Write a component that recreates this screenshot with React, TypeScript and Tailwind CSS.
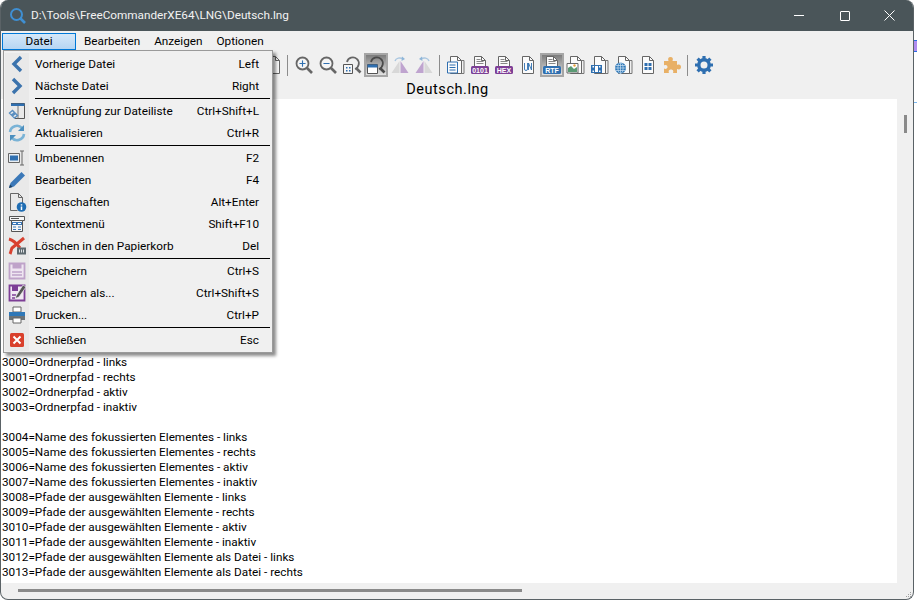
import type { ReactNode } from "react";
import { Plus, Minus } from "lucide-react";

const font = "font-['Roboto','Open_Sans',sans-serif]";

const Svg = ({ children, size = 20 }: { children: ReactNode; size?: number }) => (
  <svg width={size} height={size} viewBox="0 0 20 20" fill="none">
    {children}
  </svg>
);

/* menu icons */
const IconPrev = () => (
  <Svg><path d="M14 3 7 10l7 7" stroke="#3b73ad" strokeWidth="3.4" /></Svg>
);
const IconNext = () => (
  <Svg><path d="M6 3l7 7-7 7" stroke="#3b73ad" strokeWidth="3.4" /></Svg>
);
const IconLink = () => (
  <Svg>
    <path d="M4 2.500h13.500v15H8" stroke="#555" />
    <path d="M4 2.500h13.500v2.500H4z" fill="#2f6fb0" />
    <path d="M11 5v12.500" stroke="#777" />
    <path d="M2.500 12l3-2.500 2 2-3 2.500zM5.500 15l3-2.500 2 2-3 2.500z" stroke="#5b8fc0" strokeWidth="1.400" />
  </Svg>
);
const IconRefresh = () => (
  <Svg>
    <path d="M3 9a7 7 0 0 1 12-4" stroke="#7ab3d6" strokeWidth="2.600" />
    <path d="M17 2v6h-6z" fill="#4b8fbf" />
    <path d="M17 11a7 7 0 0 1-12 4" stroke="#7ab3d6" strokeWidth="2.600" />
    <path d="M3 18v-6h6z" fill="#4b8fbf" />
  </Svg>
);
const IconRename = () => (
  <Svg>
    <path d="M1.500 5.500h11v9h-11z" fill="#e9eef3" stroke="#666" />
    <path d="M3 7.500h8v5H3z" fill="#2f6fb0" />
    <path d="M13 3h4M15 3v14M13 17h4" stroke="#666" />
  </Svg>
);
const IconEdit = () => (
  <Svg>
    <path d="M2 18l1.500-5L14.500 2l3.500 3.500L7 16.500z" fill="#3b78b8" />
    <path d="M2 18l1-3.500L5.500 17z" fill="#1d3f60" />
  </Svg>
);
const IconProps = () => (
  <Svg>
    <path d="M3.500 1.500h8l4 4v7M3.500 1.500v17h7" stroke="#666" />
    <path d="M11.500 1.500v4h4" stroke="#666" />
    <circle cx="14.500" cy="15" r="4.800" fill="#1f6db3" />
    <path d="M14.500 12.200v1.200M14.500 14.500v3.600" stroke="#fff" strokeWidth="1.500" />
  </Svg>
);
const IconContext = () => (
  <Svg>
    <path d="M2.500 2.500h15v4h-15z" fill="#f5f5f5" stroke="#555" />
    <path d="M4 4.500h8" stroke="#555" />
    <path d="M4.500 6.500h11v11h-11z" fill="#f5f5f5" stroke="#555" />
    <path d="M5 8h10v3H5z" fill="#3b78b8" />
    <path d="M6 9.500h3M11 9.500h3" stroke="#fff" />
    <path d="M6 13h3M11 13h3M6 15.500h3M11 15.500h3" stroke="#3b78b8" />
  </Svg>
);
const IconDelete = () => (
  <Svg>
    <path d="M2 3c4 1 8 5 11 9M17 2 5 12c-1 2-1 4-2 6" stroke="#d8412f" strokeWidth="3" />
    <path d="M10 11.500h9v7h-9z" fill="#5f6a70" />
    <path d="M12.500 13.500v3M14.500 13.500v3M16.500 13.500v3" stroke="#dfe3e5" />
  </Svg>
);
const IconSave = () => (
  <Svg>
    <path d="M2.500 2.500h15v15h-15z" fill="#efe6f1" stroke="#bfa3c9" strokeWidth="1.800" />
    <path d="M5.500 2.500h9v5h-9z" fill="#bfa3c9" />
    <path d="M5 11h10M5 14h10" stroke="#bfa3c9" strokeWidth="1.400" />
  </Svg>
);
const IconSaveAs = () => (
  <Svg>
    <path d="M2.500 2.500h15v15h-15z" fill="#f1e9f3" stroke="#7d3f96" strokeWidth="1.800" />
    <path d="M5 3h6v5H5z" fill="#7d3f96" />
    <path d="M5 12h4M5 15h3" stroke="#7d3f96" strokeWidth="1.400" />
    <path d="M9 13 16 2l3 2-7 10-3.500 1.500z" fill="#555" stroke="#f0f0f0" strokeWidth="0.700" />
  </Svg>
);
const IconPrint = () => (
  <Svg>
    <path d="M6 2h8v5H6z" fill="#fff" stroke="#666" />
    <path d="M2 7h16v8H2z" fill="#6b7378" />
    <path d="M2 7h16v4H2z" fill="#2f78b8" />
    <path d="M6 13h8v5H6z" fill="#fff" stroke="#666" />
  </Svg>
);
const IconClose = () => (
  <Svg>
    <rect x="3" y="3" width="14" height="14" rx="1.500" fill="#d9402c" />
    <path d="M6.500 6.500l7 7M13.500 6.500l-7 7" stroke="#fff" strokeWidth="2" />
  </Svg>
);

/* toolbar icons */
const Magnifier = ({ children }: { children?: ReactNode }) => (
  <Svg>
    <circle cx="8.500" cy="8.500" r="6" stroke="#666" strokeWidth="1.800" fill="#f5f5f5" />
    <path d="M13 13l5 5" stroke="#666" strokeWidth="2.600" />
    {children}
  </Svg>
);
const ZoomFit = () => (
  <Svg>
    <path d="M5 7a6 6 0 1 1 8 7" stroke="#666" strokeWidth="1.800" />
    <path d="M14 13l4.500 4.500" stroke="#666" strokeWidth="2.600" />
    <path d="M1.500 9.500h9v9h-9z" fill="#f5f5f5" stroke="#555" />
    <path d="M4 12h1.500v1.500H4zM7 12h1.500v1.500H7zM4 15h1.500v1.500H4zM7 15h1.500v1.500H7z" fill="#2f6fb0" />
  </Svg>
);
const ZoomWindow = () => (
  <Svg>
    <path d="M5 7a6 6 0 1 1 8 7" stroke="#4a4a4a" strokeWidth="1.800" />
    <path d="M14 13l4.500 4.500" stroke="#4a4a4a" strokeWidth="2.600" />
    <path d="M1.500 9.500h10v9h-10z" fill="#fff" stroke="#555" />
    <path d="M1.500 9.500h10v3h-10z" fill="#2f6fb0" />
  </Svg>
);
const Mirror = ({ flip }: { flip?: boolean }) => (
  <Svg>
    <g transform={flip ? "matrix(-1 0 0 1 20 0)" : undefined}>
      <path d="M9.500 6v12H1.500z" fill="#d8d8d8" />
      <path d="M10.500 6v12h8z" fill="#bfa4cf" />
      <path d="M5 6c1-3 5-4 8-2" stroke="#a9c6e0" strokeWidth="1.400" />
      <path d="M12 1.500l3 2.500-3.500 2z" fill="#8fb6d8" />
    </g>
  </Svg>
);
const PageBase = ({ children, stack }: { children?: ReactNode; stack?: boolean }) => (
  <Svg>
    {stack && <path d="M15.500 5.500h2.500v13h-4" stroke="#777" />}
    <path d="M4.500 1.500h7l4 4v13h-11z" fill="#fbfbfb" stroke="#666" />
    <path d="M11.500 1.500v4h4" stroke="#666" />
    {children}
  </Svg>
);
const PageLines = () => (
  <PageBase stack>
    <path d="M1.500 7h10v11h-10z" fill="#fbfbfb" stroke="#2f6fb0" />
    <path d="M3.500 10h6M3.500 12.500h6M3.500 15h6" stroke="#2f6fb0" />
  </PageBase>
);
const Badge = ({ label, fill }: { label: string; fill: string }) => (
  <>
    <path d="M6.500 4.500h4M6.500 6.500h7M6.500 8.500h7" stroke="#888" />
    <rect x="1" y="11" width="18" height="8" rx="1.500" fill={fill} />
    <text x="10" y="17.600" textAnchor="middle" fontSize="7" fontWeight="700" fill="#fff" fontFamily="Liberation Sans">
      {label}
    </text>
  </>
);
const PageBin = () => <PageBase><Badge label="0101" fill="#7d3f96" /></PageBase>;
const PageHex = () => <PageBase><Badge label="HEX" fill="#7d3f96" /></PageBase>;
const PageUni = () => (
  <PageBase>
    <path d="M6.500 8v6a1.400 1.400 0 0 0 3 0V8M10.500 15V8l3 7V8" stroke="#2f6fb0" strokeWidth="0.900" />
  </PageBase>
);
const PageRtf = () => <PageBase><Badge label="RTF" fill="#2f6fb0" /></PageBase>;
const PageImg = () => (
  <PageBase stack>
    <path d="M1 8.500h11v9.500H1z" fill="#fff" stroke="#666" />
    <path d="M2 13l3-2 3 3 3-2v5H2z" fill="#5a9a74" />
    <circle cx="8.500" cy="10.500" r="1.200" fill="#e8a23c" />
  </PageBase>
);
const PageVideo = () => (
  <PageBase stack>
    <path d="M1 10h11v8H1z" fill="#2f6fb0" />
    <path d="M2.500 11h1.500v1.500H2.500zM2.500 15.500h1.500v1.500H2.500zM9 11h1.500v1.500H9zM9 15.500h1.500v1.500H9zM5 11h3v6H5z" fill="#fff" />
  </PageBase>
);
const PageWeb = () => (
  <PageBase stack>
    <circle cx="6.500" cy="13" r="5.500" fill="#2f78b8" />
    <path d="M1 13h11M6.500 7.500v11M2 10.500h9M2 15.500h9" stroke="#cfe2f2" strokeWidth="0.700" />
    <ellipse cx="6.500" cy="13" rx="2.600" ry="5.500" stroke="#cfe2f2" strokeWidth="0.700" />
  </PageBase>
);
const PageGrid = () => (
  <PageBase>
    <path d="M6.500 8h3v3h-3zM10.500 8h3v3h-3zM6.500 12h3v3h-3zM10.500 12h3v3h-3z" fill="#2f6fb0" />
  </PageBase>
);
const Puzzle = () => (
  <Svg>
    <path
      d="M2 6h4.500C5.500 3.500 6.500 2 8.500 2s3 1.500 2 4H15v4c2.500-1 4 0 4 2s-1.500 3-4 2v4h-4c1-2.500-.5-3.500-2-3.500S6 15.500 7 18H2v-4.500c2 1 3.500 0 3.500-1.500S4 9.500 2 10.500z"
      fill="#e8b066"
    />
  </Svg>
);
const Gear = () => (
  <Svg>
    <circle cx="10" cy="10" r="5.200" stroke="#2f6fb0" strokeWidth="3.400" />
    <path d="M10 1v3.500M10 15.500V19M1 10h3.500M15.500 10H19M3.600 3.600l2.500 2.500M13.900 13.900l2.500 2.500M16.400 3.600l-2.500 2.500M6.100 13.900l-2.500 2.500" stroke="#2f6fb0" strokeWidth="3.200" />
  </Svg>
);

const ToolSep = () => <div className="mx-[1px] h-[21px] w-px bg-[#8c8c8c]" />;

const Tool = ({ children, active }: { children: ReactNode; active?: boolean }) => (
  <div
    className={
      "flex h-6 w-6 items-center justify-center " +
      (active ? "border-2 border-[#a6a6a6] bg-gradient-to-b from-[#7d7d7d] to-[#e2e2e2]" : "")
    }
  >
    {children}
  </div>
);

type Row = { icon: ReactNode; label: string; key: string } | "sep";

const rows: Row[] = [
  { icon: <IconPrev />, label: "Vorherige Datei", key: "Left" },
  { icon: <IconNext />, label: "Nächste Datei", key: "Right" },
  "sep",
  { icon: <IconLink />, label: "Verknüpfung zur Dateiliste", key: "Ctrl+Shift+L" },
  { icon: <IconRefresh />, label: "Aktualisieren", key: "Ctrl+R" },
  "sep",
  { icon: <IconRename />, label: "Umbenennen", key: "F2" },
  { icon: <IconEdit />, label: "Bearbeiten", key: "F4" },
  { icon: <IconProps />, label: "Eigenschaften", key: "Alt+Enter" },
  { icon: <IconContext />, label: "Kontextmenü", key: "Shift+F10" },
  { icon: <IconDelete />, label: "Löschen in den Papierkorb", key: "Del" },
  "sep",
  { icon: <IconSave />, label: "Speichern", key: "Ctrl+S" },
  { icon: <IconSaveAs />, label: "Speichern als...", key: "Ctrl+Shift+S" },
  { icon: <IconPrint />, label: "Drucken...", key: "Ctrl+P" },
  "sep",
  { icon: <IconClose />, label: "Schließen", key: "Esc" },
];

const groups = [
  [
    "3000=Ordnerpfad - links",
    "3001=Ordnerpfad - rechts",
    "3002=Ordnerpfad - aktiv",
    "3003=Ordnerpfad - inaktiv",
  ],
  [
    "3004=Name des fokussierten Elementes - links",
    "3005=Name des fokussierten Elementes - rechts",
    "3006=Name des fokussierten Elementes - aktiv",
    "3007=Name des fokussierten Elementes - inaktiv",
    "3008=Pfade der ausgewählten Elemente - links",
    "3009=Pfade der ausgewählten Elemente - rechts",
    "3010=Pfade der ausgewählten Elemente - aktiv",
    "3011=Pfade der ausgewählten Elemente - inaktiv",
    "3012=Pfade der ausgewählten Elemente als Datei - links",
    "3013=Pfade der ausgewählten Elemente als Datei - rechts",
  ],
];

function FileMenu() {
  return (
    <div className="absolute left-[2px] top-[50px] z-10 w-[270px] border border-[#9a9a9a] bg-[#f0f0f0] pb-[1px] pl-[1px] pt-[2px] shadow-[3px_3px_3px_rgba(0,0,0,0.45)]">
      {rows.map((row, i) =>
        row === "sep" ? (
          <div key={i} className="flex h-[3px] items-center">
            <div className="h-full w-6 shrink-0 bg-[#e9e9e9]" />
            <div className="ml-[6px] mr-[2px] h-px flex-1 bg-black" />
          </div>
        ) : (
          <div key={i} className="flex h-[22px] items-center">
            <div className="flex h-full w-6 shrink-0 items-center justify-center bg-[#e9e9e9]">{row.icon}</div>
            <span className="ml-[6px] flex-1">{row.label}</span>
            <span className="mr-[13px]">{row.key}</span>
          </div>
        ),
      )}
    </div>
  );
}

export default function App() {
  return (
    <div className={`${font} relative h-[601px] w-[917px] overflow-hidden bg-white text-[11.75px] leading-[15px] text-black`}>
      <div className="relative flex h-[600px] w-[914px] flex-col overflow-hidden rounded-b-lg rounded-t-lg border-b border-l border-r border-[#5a6266] bg-[#f0f0f0]">
        {/* title bar */}
        <div className="flex h-[31px] shrink-0 items-center bg-[#4a5559] pl-2 text-[#f2f2f2]">
          <svg width="18" height="18" viewBox="0 0 18 18" fill="none" className="mr-1">
            <circle cx="7.500" cy="7.500" r="5.500" stroke="#3f8fd2" strokeWidth="2" />
            <path d="M11.500 11.500 16 16" stroke="#3f8fd2" strokeWidth="2.600" />
          </svg>
          <span>D:\Tools\FreeCommanderXE64\LNG\Deutsch.lng</span>
          <div className="ml-auto flex items-center">
            <div className="flex w-[46px] justify-center">
              <div className="h-px w-[10px] bg-white" />
            </div>
            <div className="flex w-[45px] justify-center">
              <div className="h-[10px] w-[10px] rounded-[1px] border border-white" />
            </div>
            <div className="flex w-[46px] justify-center pr-[2px]">
              <svg width="11" height="11" viewBox="0 0 11 11" stroke="#fff">
                <path d="M.5.500l10 10M10.500.500l-10 10" />
              </svg>
            </div>
          </div>
        </div>

        {/* menu bar */}
        <div className="flex h-[19px] shrink-0 items-center pl-[1px] pt-[1px]">
          <div className="flex h-[17px] w-[74px] items-center justify-center border border-[#0078d7] bg-gradient-to-b from-[#d6e8f8] to-[#b5d5f3]">
            Datei
          </div>
          <span className="ml-2">Bearbeiten</span>
          <span className="ml-[14px]">Anzeigen</span>
          <span className="ml-[14px]">Optionen</span>
        </div>

        {/* toolbar */}
        <div className="flex h-[30px] shrink-0 items-center pl-[261px]">
          <Tool><PageBase /></Tool>
          <ToolSep />
          <div className="w-[3px]" />
          <Tool><Magnifier><Plus x={4} y={4} size={9} color="#2f6fb0" strokeWidth={3} /></Magnifier></Tool>
          <Tool><Magnifier><Minus x={4} y={4} size={9} color="#2f6fb0" strokeWidth={3} /></Magnifier></Tool>
          <Tool><ZoomFit /></Tool>
          <Tool active><ZoomWindow /></Tool>
          <Tool><Mirror /></Tool>
          <Tool><Mirror flip /></Tool>
          <div className="w-[2px]" />
          <ToolSep />
          <div className="w-[3px]" />
          <Tool><PageLines /></Tool>
          <Tool><PageBin /></Tool>
          <Tool><PageHex /></Tool>
          <Tool><PageUni /></Tool>
          <Tool active><PageRtf /></Tool>
          <Tool><PageImg /></Tool>
          <Tool><PageVideo /></Tool>
          <Tool><PageWeb /></Tool>
          <Tool><PageGrid /></Tool>
          <Tool><Puzzle /></Tool>
          <div className="w-[2px]" />
          <ToolSep />
          <div className="w-[3px]" />
          <Tool><Gear /></Tool>
        </div>

        {/* file name */}
        <div className="flex h-[19px] shrink-0 items-center justify-center pr-[19px] text-[14.5px] tracking-[0.55px]">
          Deutsch.lng
        </div>

        {/* viewer */}
        <div className="flex min-h-0 flex-1">
          <div className="flex-1 overflow-hidden bg-white pl-[1px] pt-[256px]">
            {groups.map((group, i) => (
              <div key={i} className="mb-[15px]">
                {group.map((line) => (
                  <div key={line}>{line}</div>
                ))}
              </div>
            ))}
          </div>
          <div className="w-[16px] shrink-0 pl-[7px] pt-4">
            <div className="h-[18px] w-[3px] bg-[#8a8a8a]" />
          </div>
        </div>

        {/* horizontal scrollbar */}
        <div className="relative flex h-[16px] shrink-0 items-center pb-[1px] pl-[17px]">
          <div className="h-[3px] w-[504px] bg-[#8a8a8a]" />
          <div className="absolute bottom-[2px] right-[2px] grid grid-cols-3 gap-[1px]">
            {[0, 0, 1, 0, 1, 1, 1, 1, 1].map((on, i) => (
              <div key={i} className={on ? "h-[1px] w-[1px] bg-[#a0a0a0]" : "h-[1px] w-[1px]"} />
            ))}
          </div>
        </div>

        <FileMenu />
      </div>

      {/* bits of the window behind, right of the edge */}
      <div className="absolute left-[914px] top-[40px] h-[12px] w-[3px] border-b border-t border-[#2a6fe0] bg-[#b08cf0]" />
      <div className="absolute left-[914px] top-[102px] h-px w-[3px] bg-[#7ab8f0]" />
    </div>
  );
}
